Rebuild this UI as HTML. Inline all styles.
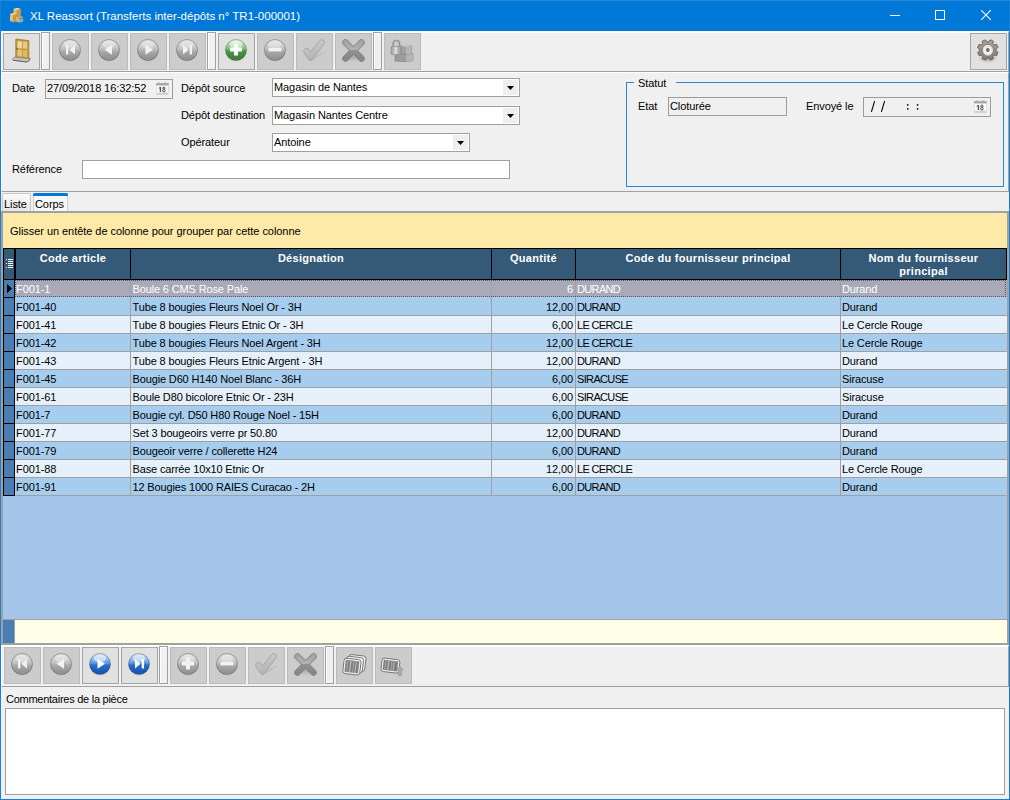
<!DOCTYPE html>
<html><head><meta charset="utf-8">
<style>
*{box-sizing:border-box;margin:0;padding:0}
html,body{width:1010px;height:800px;overflow:hidden;background:#f0f0f0;font-family:"Liberation Sans",sans-serif;font-size:11px;color:#000}
.a{position:absolute}
.t{position:absolute;white-space:pre;line-height:13px;letter-spacing:-0.09px}
#title{left:0;top:0;width:1010px;height:31px;background:#0078d7}
.btn{position:absolute;top:33px;width:37px;height:37px;border:1px solid #a5a5a5;background:#e1e1e1}
.btn.dis{border-color:#bcbcbc;background:#cccccc}
.sep{position:absolute;top:32px;width:9px;height:38px;border:1px solid #a0a0a0;background:#f0f0f0;box-shadow:inset 1px 1px 0 #fff}
.inp{position:absolute;border:1px solid #a0a0a0;background:#fff}
.hd{position:absolute;top:252px;text-align:center;color:#fff;font-weight:bold;letter-spacing:0.3px;line-height:13px;white-space:nowrap}
.inp.ro{background:#f0f0f0;border-color:#9c9c9c}
</style></head><body>
<!-- window frame -->
<div id="title" class="a"></div>
<div class="a" style="left:0;top:0;width:1px;height:800px;background:#1a7fd6"></div>
<div class="a" style="left:1009px;top:0;width:1px;height:800px;background:#1a7fd6"></div>
<div class="a" style="left:0;top:799px;width:1010px;height:1px;background:#1a7fd6"></div>
<div class="a" style="left:0;top:0;width:1010px;height:1px;background:#2a88d8"></div>
<div class="t" style="left:30px;top:10px;font-size:11.5px;color:#fff;letter-spacing:0">XL Reassort (Transferts inter-dépôts n° TR1-000001)</div>

<!-- toolbar -->
<div class="a" style="left:1px;top:31px;width:1008px;height:41px;background:#f0f0f0;border-top:2px solid #fff;border-left:1px solid #fff;border-bottom:1px solid #a0a0a0;border-right:1px solid #a0a0a0"></div>
<div class="btn" style="left:3px"></div>
<div class="sep" style="left:41px"></div>
<div class="btn dis" style="left:52px"></div>
<div class="btn dis" style="left:91px"></div>
<div class="btn dis" style="left:130px"></div>
<div class="btn dis" style="left:169px"></div>
<div class="sep" style="left:207px"></div>
<div class="btn" style="left:218px"></div>
<div class="btn dis" style="left:257px"></div>
<div class="btn dis" style="left:296px"></div>
<div class="btn dis" style="left:335px"></div>
<div class="sep" style="left:373px"></div>
<div class="btn dis" style="left:384px"></div>
<div class="btn" style="left:970px"></div>

<!-- header panel -->
<div class="a" style="left:1px;top:72px;width:1008px;height:120px;border-top:1px solid #fff;border-left:1px solid #fff;border-bottom:1px solid #a0a0a0;border-right:1px solid #a0a0a0"></div>
<div class="t" style="left:12px;top:82px">Date</div>
<div class="inp ro" style="left:45px;top:79px;width:128px;height:20px"></div>
<div class="t" style="left:47px;top:82px">27/09/2018 16:32:52</div>
<div class="t" style="left:181px;top:82px">Dépôt source</div>
<div class="t" style="left:181px;top:109px">Dépôt destination</div>
<div class="t" style="left:181px;top:136px">Opérateur</div>
<div class="t" style="left:12px;top:163px">Référence</div>
<div class="inp" style="left:272px;top:78px;width:248px;height:19px"></div>
<div class="t" style="left:274px;top:81px">Magasin de Nantes</div>
<div class="inp" style="left:272px;top:106px;width:248px;height:19px"></div>
<div class="t" style="left:274px;top:109px">Magasin Nantes Centre</div>
<div class="inp" style="left:272px;top:133px;width:198px;height:19px"></div>
<div class="t" style="left:274px;top:136px">Antoine</div>
<div class="inp" style="left:82px;top:160px;width:428px;height:19px"></div>

<!-- statut group -->
<div class="a" style="left:626px;top:82px;width:378px;height:105px;border:1px solid #2b87d6"></div>
<div class="a" style="left:634px;top:77px;width:42px;height:10px;background:#f0f0f0"></div>
<div class="t" style="left:638px;top:77px">Statut</div>
<div class="t" style="left:638px;top:100px">Etat</div>
<div class="inp ro" style="left:668px;top:97px;width:119px;height:19px"></div>
<div class="t" style="left:670px;top:100px">Cloturée</div>
<div class="t" style="left:806px;top:100px">Envoyé le</div>
<div class="inp ro" style="left:863px;top:97px;width:128px;height:20px"></div>

<!-- tabs -->
<div class="a" style="left:2px;top:193px;width:29px;height:19px;border:1px solid #c8c8c8;border-bottom:none;border-radius:2px 2px 0 0;background:linear-gradient(#fbfbfb,#e6e6e6)"></div>
<div class="t" style="left:4px;top:198px">Liste</div>
<div class="a" style="left:33px;top:193px;width:35px;height:19px;border:1px solid #cfcfcf;border-top:none;border-bottom:none;background:#f7f7f7"></div>
<div class="a" style="left:33px;top:193px;width:35px;height:3px;background:#0078d7;border-radius:2px 2px 0 0"></div>
<div class="t" style="left:35px;top:198px">Corps</div>
<!-- grid -->
<div class="a" style="left:1px;top:211px;width:1008px;height:434px;border:2px solid #a0a0a0;background:#a4c4e9"></div>
<div class="a" style="left:3px;top:213px;width:1004px;height:35px;background:#fde9a8"></div>
<div class="t" style="left:10px;top:225px;letter-spacing:-0.05px">Glisser un entête de colonne pour grouper par cette colonne</div>
<!--GRID-->
<div class="a" style="left:3px;top:248px;width:1004px;height:32px;background:#000"></div>
<div class="a" style="left:4px;top:249px;width:10px;height:30px;background:#355a78"></div>
<div class="a" style="left:16px;top:249px;width:114px;height:30px;background:#355a78"></div>
<div class="a" style="left:131px;top:249px;width:360px;height:30px;background:#355a78"></div>
<div class="a" style="left:492px;top:249px;width:83px;height:30px;background:#355a78"></div>
<div class="a" style="left:576px;top:249px;width:264px;height:30px;background:#355a78"></div>
<div class="a" style="left:841px;top:249px;width:165px;height:30px;background:#355a78"></div>
<div class="hd" style="left:16px;width:114px">Code article</div>
<div class="hd" style="left:131px;width:360px">Désignation</div>
<div class="hd" style="left:492px;width:83px">Quantité</div>
<div class="hd" style="left:576px;width:264px">Code du fournisseur principal</div>
<div class="hd" style="left:841px;width:165px">Nom du fournisseur<br>principal</div>
<svg class="a" style="left:6px;top:259px" width="8" height="10" viewBox="0 0 8 10" shape-rendering="crispEdges"><rect x="0" y="0" width="1" height="1" fill="#fff"/><rect x="2" y="0" width="5" height="1" fill="#fff"/><rect x="2" y="2" width="5" height="1" fill="#fff"/><rect x="0" y="4" width="1" height="1" fill="#fff"/><rect x="2" y="4" width="5" height="1" fill="#fff"/><rect x="2" y="6" width="5" height="1" fill="#fff"/><rect x="0" y="8" width="1" height="1" fill="#fff"/><rect x="2" y="8" width="5" height="1" fill="#fff"/></svg>
<div class="a" style="left:3px;top:280px;width:12px;height:216px;background:#000"></div>
<div class="a" style="left:4px;top:280px;width:10px;height:17px;background:#4a7db2"></div>
<div class="a" style="left:15px;top:280px;width:992px;height:17px;background:#a0a0a0"></div>
<div class="a" style="left:15px;top:280px;width:115px;height:17px;background:#a9a9b7"></div>
<div class="a" style="left:131px;top:280px;width:360px;height:17px;background:#a9a9b7"></div>
<div class="a" style="left:492px;top:280px;width:83px;height:17px;background:#a9a9b7"></div>
<div class="a" style="left:576px;top:280px;width:264px;height:17px;background:#a9a9b7"></div>
<div class="a" style="left:841px;top:280px;width:166px;height:17px;background:#a9a9b7"></div>
<div class="t" style="left:16px;top:283px;color:#fff">F001-1</div>
<div class="t" style="left:132.5px;top:283px;color:#fff;letter-spacing:-0.14px">Boule 6 CMS Rose Pale</div>
<div class="t" style="left:492px;top:283px;width:81px;text-align:right;color:#fff">6</div>
<div class="t" style="left:577px;top:283px;color:#fff;letter-spacing:-0.65px">DURAND</div>
<div class="t" style="left:842px;top:283px;color:#fff;letter-spacing:-0.14px">Durand</div>
<div class="a" style="left:4px;top:298px;width:10px;height:17px;background:#4a7db2"></div>
<div class="a" style="left:15px;top:297px;width:992px;height:19px;background:#a0a0a0"></div>
<div class="a" style="left:15px;top:297px;width:115px;height:18px;background:#a6cdee"></div>
<div class="a" style="left:131px;top:297px;width:360px;height:18px;background:#a6cdee"></div>
<div class="a" style="left:492px;top:297px;width:83px;height:18px;background:#a6cdee"></div>
<div class="a" style="left:576px;top:297px;width:264px;height:18px;background:#a6cdee"></div>
<div class="a" style="left:841px;top:297px;width:166px;height:18px;background:#a6cdee"></div>
<div class="t" style="left:16px;top:301px;color:#000">F001-40</div>
<div class="t" style="left:132.5px;top:301px;color:#000;letter-spacing:-0.14px">Tube 8 bougies Fleurs Noel Or - 3H</div>
<div class="t" style="left:492px;top:301px;width:81px;text-align:right;color:#000">12,00</div>
<div class="t" style="left:577px;top:301px;color:#000;letter-spacing:-0.65px">DURAND</div>
<div class="t" style="left:842px;top:301px;color:#000;letter-spacing:-0.14px">Durand</div>
<div class="a" style="left:4px;top:316px;width:10px;height:17px;background:#4a7db2"></div>
<div class="a" style="left:15px;top:316px;width:992px;height:18px;background:#a0a0a0"></div>
<div class="a" style="left:15px;top:316px;width:115px;height:17px;background:#e6f0fa"></div>
<div class="a" style="left:131px;top:316px;width:360px;height:17px;background:#e6f0fa"></div>
<div class="a" style="left:492px;top:316px;width:83px;height:17px;background:#e6f0fa"></div>
<div class="a" style="left:576px;top:316px;width:264px;height:17px;background:#e6f0fa"></div>
<div class="a" style="left:841px;top:316px;width:166px;height:17px;background:#e6f0fa"></div>
<div class="t" style="left:16px;top:319px;color:#000">F001-41</div>
<div class="t" style="left:132.5px;top:319px;color:#000;letter-spacing:-0.14px">Tube 8 bougies Fleurs Etnic Or - 3H</div>
<div class="t" style="left:492px;top:319px;width:81px;text-align:right;color:#000">6,00</div>
<div class="t" style="left:577px;top:319px;color:#000;letter-spacing:-0.65px">LE CERCLE</div>
<div class="t" style="left:842px;top:319px;color:#000;letter-spacing:-0.14px">Le Cercle Rouge</div>
<div class="a" style="left:4px;top:334px;width:10px;height:17px;background:#4a7db2"></div>
<div class="a" style="left:15px;top:334px;width:992px;height:18px;background:#a0a0a0"></div>
<div class="a" style="left:15px;top:334px;width:115px;height:17px;background:#a6cdee"></div>
<div class="a" style="left:131px;top:334px;width:360px;height:17px;background:#a6cdee"></div>
<div class="a" style="left:492px;top:334px;width:83px;height:17px;background:#a6cdee"></div>
<div class="a" style="left:576px;top:334px;width:264px;height:17px;background:#a6cdee"></div>
<div class="a" style="left:841px;top:334px;width:166px;height:17px;background:#a6cdee"></div>
<div class="t" style="left:16px;top:337px;color:#000">F001-42</div>
<div class="t" style="left:132.5px;top:337px;color:#000;letter-spacing:-0.14px">Tube 8 bougies Fleurs Noel Argent - 3H</div>
<div class="t" style="left:492px;top:337px;width:81px;text-align:right;color:#000">12,00</div>
<div class="t" style="left:577px;top:337px;color:#000;letter-spacing:-0.65px">LE CERCLE</div>
<div class="t" style="left:842px;top:337px;color:#000;letter-spacing:-0.14px">Le Cercle Rouge</div>
<div class="a" style="left:4px;top:352px;width:10px;height:17px;background:#4a7db2"></div>
<div class="a" style="left:15px;top:352px;width:992px;height:18px;background:#a0a0a0"></div>
<div class="a" style="left:15px;top:352px;width:115px;height:17px;background:#e6f0fa"></div>
<div class="a" style="left:131px;top:352px;width:360px;height:17px;background:#e6f0fa"></div>
<div class="a" style="left:492px;top:352px;width:83px;height:17px;background:#e6f0fa"></div>
<div class="a" style="left:576px;top:352px;width:264px;height:17px;background:#e6f0fa"></div>
<div class="a" style="left:841px;top:352px;width:166px;height:17px;background:#e6f0fa"></div>
<div class="t" style="left:16px;top:355px;color:#000">F001-43</div>
<div class="t" style="left:132.5px;top:355px;color:#000;letter-spacing:-0.14px">Tube 8 bougies Fleurs Etnic Argent - 3H</div>
<div class="t" style="left:492px;top:355px;width:81px;text-align:right;color:#000">12,00</div>
<div class="t" style="left:577px;top:355px;color:#000;letter-spacing:-0.65px">DURAND</div>
<div class="t" style="left:842px;top:355px;color:#000;letter-spacing:-0.14px">Durand</div>
<div class="a" style="left:4px;top:370px;width:10px;height:17px;background:#4a7db2"></div>
<div class="a" style="left:15px;top:370px;width:992px;height:18px;background:#a0a0a0"></div>
<div class="a" style="left:15px;top:370px;width:115px;height:17px;background:#a6cdee"></div>
<div class="a" style="left:131px;top:370px;width:360px;height:17px;background:#a6cdee"></div>
<div class="a" style="left:492px;top:370px;width:83px;height:17px;background:#a6cdee"></div>
<div class="a" style="left:576px;top:370px;width:264px;height:17px;background:#a6cdee"></div>
<div class="a" style="left:841px;top:370px;width:166px;height:17px;background:#a6cdee"></div>
<div class="t" style="left:16px;top:373px;color:#000">F001-45</div>
<div class="t" style="left:132.5px;top:373px;color:#000;letter-spacing:-0.14px">Bougie D60 H140 Noel Blanc - 36H</div>
<div class="t" style="left:492px;top:373px;width:81px;text-align:right;color:#000">6,00</div>
<div class="t" style="left:577px;top:373px;color:#000;letter-spacing:-0.65px">SIRACUSE</div>
<div class="t" style="left:842px;top:373px;color:#000;letter-spacing:-0.14px">Siracuse</div>
<div class="a" style="left:4px;top:388px;width:10px;height:17px;background:#4a7db2"></div>
<div class="a" style="left:15px;top:388px;width:992px;height:18px;background:#a0a0a0"></div>
<div class="a" style="left:15px;top:388px;width:115px;height:17px;background:#e6f0fa"></div>
<div class="a" style="left:131px;top:388px;width:360px;height:17px;background:#e6f0fa"></div>
<div class="a" style="left:492px;top:388px;width:83px;height:17px;background:#e6f0fa"></div>
<div class="a" style="left:576px;top:388px;width:264px;height:17px;background:#e6f0fa"></div>
<div class="a" style="left:841px;top:388px;width:166px;height:17px;background:#e6f0fa"></div>
<div class="t" style="left:16px;top:391px;color:#000">F001-61</div>
<div class="t" style="left:132.5px;top:391px;color:#000;letter-spacing:-0.14px">Boule D80 bicolore Etnic Or - 23H</div>
<div class="t" style="left:492px;top:391px;width:81px;text-align:right;color:#000">6,00</div>
<div class="t" style="left:577px;top:391px;color:#000;letter-spacing:-0.65px">SIRACUSE</div>
<div class="t" style="left:842px;top:391px;color:#000;letter-spacing:-0.14px">Siracuse</div>
<div class="a" style="left:4px;top:406px;width:10px;height:17px;background:#4a7db2"></div>
<div class="a" style="left:15px;top:406px;width:992px;height:18px;background:#a0a0a0"></div>
<div class="a" style="left:15px;top:406px;width:115px;height:17px;background:#a6cdee"></div>
<div class="a" style="left:131px;top:406px;width:360px;height:17px;background:#a6cdee"></div>
<div class="a" style="left:492px;top:406px;width:83px;height:17px;background:#a6cdee"></div>
<div class="a" style="left:576px;top:406px;width:264px;height:17px;background:#a6cdee"></div>
<div class="a" style="left:841px;top:406px;width:166px;height:17px;background:#a6cdee"></div>
<div class="t" style="left:16px;top:409px;color:#000">F001-7</div>
<div class="t" style="left:132.5px;top:409px;color:#000;letter-spacing:-0.14px">Bougie cyl. D50 H80 Rouge Noel - 15H</div>
<div class="t" style="left:492px;top:409px;width:81px;text-align:right;color:#000">6,00</div>
<div class="t" style="left:577px;top:409px;color:#000;letter-spacing:-0.65px">DURAND</div>
<div class="t" style="left:842px;top:409px;color:#000;letter-spacing:-0.14px">Durand</div>
<div class="a" style="left:4px;top:424px;width:10px;height:17px;background:#4a7db2"></div>
<div class="a" style="left:15px;top:424px;width:992px;height:18px;background:#a0a0a0"></div>
<div class="a" style="left:15px;top:424px;width:115px;height:17px;background:#e6f0fa"></div>
<div class="a" style="left:131px;top:424px;width:360px;height:17px;background:#e6f0fa"></div>
<div class="a" style="left:492px;top:424px;width:83px;height:17px;background:#e6f0fa"></div>
<div class="a" style="left:576px;top:424px;width:264px;height:17px;background:#e6f0fa"></div>
<div class="a" style="left:841px;top:424px;width:166px;height:17px;background:#e6f0fa"></div>
<div class="t" style="left:16px;top:427px;color:#000">F001-77</div>
<div class="t" style="left:132.5px;top:427px;color:#000;letter-spacing:-0.14px">Set 3 bougeoirs verre pr 50.80</div>
<div class="t" style="left:492px;top:427px;width:81px;text-align:right;color:#000">12,00</div>
<div class="t" style="left:577px;top:427px;color:#000;letter-spacing:-0.65px">DURAND</div>
<div class="t" style="left:842px;top:427px;color:#000;letter-spacing:-0.14px">Durand</div>
<div class="a" style="left:4px;top:442px;width:10px;height:17px;background:#4a7db2"></div>
<div class="a" style="left:15px;top:442px;width:992px;height:18px;background:#a0a0a0"></div>
<div class="a" style="left:15px;top:442px;width:115px;height:17px;background:#a6cdee"></div>
<div class="a" style="left:131px;top:442px;width:360px;height:17px;background:#a6cdee"></div>
<div class="a" style="left:492px;top:442px;width:83px;height:17px;background:#a6cdee"></div>
<div class="a" style="left:576px;top:442px;width:264px;height:17px;background:#a6cdee"></div>
<div class="a" style="left:841px;top:442px;width:166px;height:17px;background:#a6cdee"></div>
<div class="t" style="left:16px;top:445px;color:#000">F001-79</div>
<div class="t" style="left:132.5px;top:445px;color:#000;letter-spacing:-0.14px">Bougeoir verre / collerette H24</div>
<div class="t" style="left:492px;top:445px;width:81px;text-align:right;color:#000">6,00</div>
<div class="t" style="left:577px;top:445px;color:#000;letter-spacing:-0.65px">DURAND</div>
<div class="t" style="left:842px;top:445px;color:#000;letter-spacing:-0.14px">Durand</div>
<div class="a" style="left:4px;top:460px;width:10px;height:17px;background:#4a7db2"></div>
<div class="a" style="left:15px;top:460px;width:992px;height:18px;background:#a0a0a0"></div>
<div class="a" style="left:15px;top:460px;width:115px;height:17px;background:#e6f0fa"></div>
<div class="a" style="left:131px;top:460px;width:360px;height:17px;background:#e6f0fa"></div>
<div class="a" style="left:492px;top:460px;width:83px;height:17px;background:#e6f0fa"></div>
<div class="a" style="left:576px;top:460px;width:264px;height:17px;background:#e6f0fa"></div>
<div class="a" style="left:841px;top:460px;width:166px;height:17px;background:#e6f0fa"></div>
<div class="t" style="left:16px;top:463px;color:#000">F001-88</div>
<div class="t" style="left:132.5px;top:463px;color:#000;letter-spacing:-0.14px">Base carrée 10x10 Etnic Or</div>
<div class="t" style="left:492px;top:463px;width:81px;text-align:right;color:#000">12,00</div>
<div class="t" style="left:577px;top:463px;color:#000;letter-spacing:-0.65px">LE CERCLE</div>
<div class="t" style="left:842px;top:463px;color:#000;letter-spacing:-0.14px">Le Cercle Rouge</div>
<div class="a" style="left:4px;top:478px;width:10px;height:17px;background:#4a7db2"></div>
<div class="a" style="left:15px;top:478px;width:992px;height:18px;background:#a0a0a0"></div>
<div class="a" style="left:15px;top:478px;width:115px;height:17px;background:#a6cdee"></div>
<div class="a" style="left:131px;top:478px;width:360px;height:17px;background:#a6cdee"></div>
<div class="a" style="left:492px;top:478px;width:83px;height:17px;background:#a6cdee"></div>
<div class="a" style="left:576px;top:478px;width:264px;height:17px;background:#a6cdee"></div>
<div class="a" style="left:841px;top:478px;width:166px;height:17px;background:#a6cdee"></div>
<div class="t" style="left:16px;top:481px;color:#000">F001-91</div>
<div class="t" style="left:132.5px;top:481px;color:#000;letter-spacing:-0.14px">12 Bougies 1000 RAIES Curacao - 2H</div>
<div class="t" style="left:492px;top:481px;width:81px;text-align:right;color:#000">6,00</div>
<div class="t" style="left:577px;top:481px;color:#000;letter-spacing:-0.65px">DURAND</div>
<div class="t" style="left:842px;top:481px;color:#000;letter-spacing:-0.14px">Durand</div>
<div class="a" style="left:15px;top:280px;width:991px;height:17px;border:1px dotted #55556a"></div>
<svg class="a" style="left:7px;top:284px" width="6" height="10" viewBox="0 0 6 10"><path d="M0 0 L5 4.6 L0 9.3 Z" fill="#000"/></svg>
<!--/GRID-->
<!--BOTTOM-->
<div class="a" style="left:3px;top:619px;width:1004px;height:1px;background:#a0a0a0"></div>
<div class="a" style="left:3px;top:620px;width:11px;height:23px;background:#4a7db2"></div>
<div class="a" style="left:14px;top:620px;width:1px;height:23px;background:#a0a0a0"></div>
<div class="a" style="left:15px;top:620px;width:992px;height:23px;background:#fffee6"></div>
<!-- bottom toolbar -->
<div class="a" style="left:1px;top:645px;width:1008px;height:42px;border-top:2px solid #fff;border-left:1px solid #fff;border-bottom:1px solid #a0a0a0;border-right:1px solid #a0a0a0"></div>
<div class="btn dis" style="left:4px;top:647px"></div>
<div class="btn dis" style="left:43px;top:647px"></div>
<div class="btn" style="left:82px;top:647px"></div>
<div class="btn" style="left:121px;top:647px"></div>
<div class="sep" style="left:159px;top:646px"></div>
<div class="btn dis" style="left:170px;top:647px"></div>
<div class="btn dis" style="left:209px;top:647px"></div>
<div class="btn dis" style="left:248px;top:647px"></div>
<div class="btn dis" style="left:287px;top:647px"></div>
<div class="sep" style="left:325px;top:646px"></div>
<div class="btn dis" style="left:336px;top:647px"></div>
<div class="btn dis" style="left:375px;top:647px"></div>
<div class="t" style="left:6px;top:693px;letter-spacing:-0.26px">Commentaires de la pièce</div>
<div class="inp" style="left:5px;top:708px;width:1000px;height:87px"></div>
<!--/BOTTOM-->
<!--ICONS-->
<svg width="0" height="0" style="position:absolute">
<defs>
<linearGradient id="gball" x1="0" y1="0" x2="0" y2="1">
 <stop offset="0" stop-color="#e2e2e2"/><stop offset="0.42" stop-color="#c4c4c4"/><stop offset="0.6" stop-color="#a6a6a6"/><stop offset="0.9" stop-color="#939393"/><stop offset="1" stop-color="#a0a0a0"/></linearGradient>
<linearGradient id="grn" x1="0" y1="0" x2="0" y2="1">
 <stop offset="0" stop-color="#e4f2e2"/><stop offset="0.46" stop-color="#78c072"/><stop offset="0.54" stop-color="#4a9a46"/><stop offset="0.9" stop-color="#3d7f3a"/><stop offset="1" stop-color="#4a8f46"/></linearGradient>
<linearGradient id="blu" x1="0" y1="0" x2="0" y2="1">
 <stop offset="0" stop-color="#d4e6fa"/><stop offset="0.46" stop-color="#5c9ae4"/><stop offset="0.54" stop-color="#2a6fd0"/><stop offset="0.9" stop-color="#1a54b4"/><stop offset="1" stop-color="#2a66c4"/></linearGradient>
<radialGradient id="shad" cx="0.5" cy="0.5" r="0.5">
 <stop offset="0" stop-color="#000" stop-opacity="0.25"/><stop offset="1" stop-color="#000" stop-opacity="0"/></radialGradient>
<linearGradient id="door" x1="0" y1="0" x2="1" y2="0">
 <stop offset="0" stop-color="#c98c2e"/><stop offset="0.5" stop-color="#e6c27a"/><stop offset="1" stop-color="#c48a30"/></linearGradient>
<linearGradient id="chk" x1="0" y1="0" x2="0.3" y2="1"><stop offset="0" stop-color="#d2d2d2"/><stop offset="1" stop-color="#b2b2b2"/></linearGradient>
<linearGradient id="xg" x1="0" y1="0" x2="0" y2="1"><stop offset="0" stop-color="#a2a2a2"/><stop offset="0.45" stop-color="#b0b0b0"/><stop offset="0.5" stop-color="#929292"/><stop offset="1" stop-color="#888888"/></linearGradient>
<linearGradient id="lockg" x1="0" y1="0" x2="1" y2="0"><stop offset="0" stop-color="#9c9c9c"/><stop offset="0.4" stop-color="#d0d0d0"/><stop offset="1" stop-color="#9a9a9a"/></linearGradient>
<linearGradient id="gearg" x1="0" y1="0" x2="0" y2="1">
 <stop offset="0" stop-color="#aaa29c"/><stop offset="1" stop-color="#837a74"/></linearGradient>
</defs></svg>
<svg class="a" style="left:52px;top:33px" width="37" height="37" viewBox="0 0 37 37"><ellipse cx="18" cy="21" rx="10.5" ry="8.4" fill="url(#shad)"/><circle cx="18" cy="17" r="10.5" fill="url(#gball)" stroke="rgba(0,0,0,0.3)" stroke-width="0.9"/><ellipse cx="18" cy="11.5" rx="6.3" ry="3.78" fill="#fff" opacity="0.3"/><rect x="14" y="12" width="2.3" height="9.5" fill="#f2f2f2"/><path d="M17.5 16.8 L23 12 L23 21.6 Z" fill="#f2f2f2"/></svg>
<svg class="a" style="left:91px;top:33px" width="37" height="37" viewBox="0 0 37 37"><ellipse cx="18" cy="21" rx="10.5" ry="8.4" fill="url(#shad)"/><circle cx="18" cy="17" r="10.5" fill="url(#gball)" stroke="rgba(0,0,0,0.3)" stroke-width="0.9"/><ellipse cx="18" cy="11.5" rx="6.3" ry="3.78" fill="#fff" opacity="0.3"/><path d="M13.5 16.8 L21 11.8 L21 21.8 Z" fill="#f2f2f2"/></svg>
<svg class="a" style="left:130px;top:33px" width="37" height="37" viewBox="0 0 37 37"><ellipse cx="18" cy="21" rx="10.5" ry="8.4" fill="url(#shad)"/><circle cx="18" cy="17" r="10.5" fill="url(#gball)" stroke="rgba(0,0,0,0.3)" stroke-width="0.9"/><ellipse cx="18" cy="11.5" rx="6.3" ry="3.78" fill="#fff" opacity="0.3"/><path d="M23 16.8 L15.5 11.8 L15.5 21.8 Z" fill="#f2f2f2"/></svg>
<svg class="a" style="left:169px;top:33px" width="37" height="37" viewBox="0 0 37 37"><ellipse cx="18" cy="21" rx="10.5" ry="8.4" fill="url(#shad)"/><circle cx="18" cy="17" r="10.5" fill="url(#gball)" stroke="rgba(0,0,0,0.3)" stroke-width="0.9"/><ellipse cx="18" cy="11.5" rx="6.3" ry="3.78" fill="#fff" opacity="0.3"/><path d="M19.5 16.8 L14 12 L14 21.6 Z" fill="#f2f2f2"/><rect x="20.7" y="12" width="2.3" height="9.5" fill="#f2f2f2"/></svg>
<svg class="a" style="left:218px;top:33px" width="37" height="37" viewBox="0 0 37 37"><ellipse cx="18" cy="21" rx="10.5" ry="8.4" fill="url(#shad)"/><circle cx="18" cy="17" r="10.5" fill="url(#grn)" stroke="rgba(0,0,0,0.3)" stroke-width="0.9"/><ellipse cx="18" cy="11.5" rx="6.3" ry="3.78" fill="#fff" opacity="0.5"/><rect x="12" y="14.5" width="12" height="4" fill="#fafafa"/><rect x="16" y="10.5" width="4" height="12" fill="#fafafa"/></svg>
<svg class="a" style="left:257px;top:33px" width="37" height="37" viewBox="0 0 37 37"><ellipse cx="18" cy="21" rx="10.5" ry="8.4" fill="url(#shad)"/><circle cx="18" cy="17" r="10.5" fill="url(#gball)" stroke="rgba(0,0,0,0.3)" stroke-width="0.9"/><ellipse cx="18" cy="11.5" rx="6.3" ry="3.78" fill="#fff" opacity="0.3"/><rect x="11.5" y="14.8" width="13" height="3.6" fill="#f2f2f2"/></svg>
<svg class="a" style="left:296px;top:33px" width="37" height="37" viewBox="0 0 37 37"><path d="M12 25 Q15 29 19 26 L29 20 Q31 19 28 19 L18 22 Z" fill="#000" opacity="0.05"/><path d="M7.8 19.5 Q7 16.5 9.8 15.3 Q12 14.5 13.2 16.6 L14.6 19 L23.8 7.6 Q25.5 5.8 27.6 7.5 Q29.2 9 28 10.8 L16 26.8 Q14.5 28.6 13 26.8 Z" fill="url(#chk)" stroke="#a2a2a2" stroke-width="0.9"/></svg>
<svg class="a" style="left:335px;top:33px" width="37" height="37" viewBox="0 0 37 37"><ellipse cx="18.5" cy="24" rx="11" ry="5" fill="url(#shad)" opacity="0.6"/><path d="M10.5 9.5 L26.5 25.5 M26.5 9.5 L10.5 25.5" stroke="#868686" stroke-width="6.6" fill="none" stroke-linecap="round"/><path d="M10.5 9.5 L26.5 25.5 M26.5 9.5 L10.5 25.5" stroke="url(#xg)" stroke-width="5" fill="none" stroke-linecap="round"/><path d="M11 10 L18.5 16.5 L26 10" stroke="#b0b0b0" stroke-width="1.6" fill="none" stroke-linecap="round" opacity="0.8"/></svg>
<svg class="a" style="left:384px;top:33px" width="37" height="37" viewBox="0 0 37 37"><path d="M11 28 L11 20.5 L22 19.5 L29 20.5 L29 27.5 L22 28.8 Z" fill="#9c9c9c" stroke="#858585" stroke-width="0.7"/><path d="M22 21 L29 20.5 L29 27.5 L22 28.8 Z" fill="#b4b4b4"/><path d="M16.5 20.5 L16.5 13 L22 12 L27.5 13 L27.5 20.5 L22 21.5 Z" fill="#a2a2a2" stroke="#858585" stroke-width="0.7"/><path d="M16.5 13 L21.5 11 L27.5 12.5 L22 13.8 Z" fill="#c6c6c6"/><path d="M22 13.8 L27.5 12.5 L27.5 20.5 L22 21.5 Z" fill="#b6b6b6"/><path d="M9.2 13.5 L9.2 10.8 A3.2 3.3 0 0 1 15.6 10.8 L15.6 13.5" stroke="#979797" stroke-width="1.7" fill="none"/><rect x="7.2" y="13.4" width="9.8" height="8.2" rx="0.8" fill="url(#lockg)" stroke="#888" stroke-width="0.7"/><rect x="11" y="13.8" width="1.6" height="7.4" fill="#e2e2e2"/></svg>
<svg class="a" style="left:3px;top:33px" width="37" height="37" viewBox="0 0 37 37"><path d="M9.5 25.5 L13 23.5 L26.8 24.8 L27.2 26.5 L24 29 L10 27.2 Z" fill="#c4c4c4" stroke="#7e7e7e" stroke-width="0.7"/><path d="M10 27.2 L24 29 L27.2 26.5" fill="none" stroke="#6a6a6a" stroke-width="1"/><path d="M12.8 6 L25.8 7.6 L25.8 25.6 L12.8 24 Z" fill="#c8983e" stroke="#9a6c26" stroke-width="0.7"/><path d="M14.5 8 L19 8.5 L19 15.5 L14.5 15.2 Z" fill="#eed9a0"/><path d="M20 8.6 L24.3 9.1 L24.3 15.8 L20 15.6 Z" fill="#e6cc88"/><path d="M14.5 16.6 L19 16.9 L19 23.5 L14.5 23.2 Z" fill="#e2c47a"/><path d="M20 17 L24.3 17.3 L24.3 24 L20 23.7 Z" fill="#dcba6c"/><rect x="13.6" y="15.2" width="1.1" height="1.3" fill="#3a3a3a"/></svg>
<svg class="a" style="left:970px;top:33px" width="37" height="37" viewBox="0 0 37 37"><ellipse cx="18" cy="25" rx="10.5" ry="5.5" fill="url(#shad)" opacity="0.9"/><polygon points="20.03,6.84 20.69,7.01 21.34,7.22 21.97,7.47 22.58,7.76 23.18,8.10 23.17,9.29 22.92,10.59 23.33,10.94 23.71,11.32 24.07,11.72 24.83,11.82 26.56,11.39 26.91,11.98 27.22,12.58 27.48,13.21 27.71,13.85 27.90,14.51 27.05,15.35 25.95,16.09 25.99,16.62 26.00,17.16 25.97,17.70 26.43,18.31 27.96,19.23 27.79,19.89 27.58,20.54 27.33,21.17 27.04,21.78 26.70,22.38 25.51,22.37 24.21,22.12 23.86,22.53 23.48,22.91 23.08,23.27 22.98,24.03 23.41,25.76 22.82,26.11 22.22,26.42 21.59,26.68 20.95,26.91 20.29,27.10 19.45,26.25 18.71,25.15 18.18,25.19 17.64,25.20 17.10,25.17 16.49,25.63 15.57,27.16 14.91,26.99 14.26,26.78 13.63,26.53 13.02,26.24 12.42,25.90 12.43,24.71 12.68,23.41 12.27,23.06 11.89,22.68 11.53,22.28 10.77,22.18 9.04,22.61 8.69,22.02 8.38,21.42 8.12,20.79 7.89,20.15 7.70,19.49 8.55,18.65 9.65,17.91 9.61,17.38 9.60,16.84 9.63,16.30 9.17,15.69 7.64,14.77 7.81,14.11 8.02,13.46 8.27,12.83 8.56,12.22 8.90,11.62 10.09,11.63 11.39,11.88 11.74,11.47 12.12,11.09 12.52,10.73 12.62,9.97 12.19,8.24 12.78,7.89 13.38,7.58 14.01,7.32 14.65,7.09 15.31,6.90 16.15,7.75 16.89,8.85 17.42,8.81 17.96,8.80 18.50,8.83 19.11,8.37" fill="url(#gearg)" stroke="#635850" stroke-width="0.9" stroke-linejoin="round"/><circle cx="17.8" cy="17.0" r="5.6" fill="#f2f2f2" stroke="#6e6660" stroke-width="0.7"/><circle cx="17.8" cy="17.8" r="4.6" fill="none" stroke="#d4d4d4" stroke-width="0.8"/><circle cx="17.8" cy="17.0" r="1.9" fill="#6c6c6c"/></svg>
<svg class="a" style="left:4px;top:647px" width="37" height="37" viewBox="0 0 37 37"><ellipse cx="18" cy="21" rx="10.5" ry="8.4" fill="url(#shad)"/><circle cx="18" cy="17" r="10.5" fill="url(#gball)" stroke="rgba(0,0,0,0.3)" stroke-width="0.9"/><ellipse cx="18" cy="11.5" rx="6.3" ry="3.78" fill="#fff" opacity="0.3"/><rect x="14" y="12" width="2.3" height="9.5" fill="#f2f2f2"/><path d="M17.5 16.8 L23 12 L23 21.6 Z" fill="#f2f2f2"/></svg>
<svg class="a" style="left:43px;top:647px" width="37" height="37" viewBox="0 0 37 37"><ellipse cx="18" cy="21" rx="10.5" ry="8.4" fill="url(#shad)"/><circle cx="18" cy="17" r="10.5" fill="url(#gball)" stroke="rgba(0,0,0,0.3)" stroke-width="0.9"/><ellipse cx="18" cy="11.5" rx="6.3" ry="3.78" fill="#fff" opacity="0.3"/><path d="M13.5 16.8 L21 11.8 L21 21.8 Z" fill="#f2f2f2"/></svg>
<svg class="a" style="left:82px;top:647px" width="37" height="37" viewBox="0 0 37 37"><ellipse cx="18" cy="21" rx="10.5" ry="8.4" fill="url(#shad)"/><circle cx="18" cy="17" r="10.5" fill="url(#blu)" stroke="rgba(0,0,0,0.3)" stroke-width="0.9"/><ellipse cx="18" cy="11.5" rx="6.3" ry="3.78" fill="#fff" opacity="0.5"/><path d="M23 16.8 L15.5 11.8 L15.5 21.8 Z" fill="#fbfbfb"/></svg>
<svg class="a" style="left:121px;top:647px" width="37" height="37" viewBox="0 0 37 37"><ellipse cx="18" cy="21" rx="10.5" ry="8.4" fill="url(#shad)"/><circle cx="18" cy="17" r="10.5" fill="url(#blu)" stroke="rgba(0,0,0,0.3)" stroke-width="0.9"/><ellipse cx="18" cy="11.5" rx="6.3" ry="3.78" fill="#fff" opacity="0.5"/><path d="M19.5 16.8 L14 12 L14 21.6 Z" fill="#fbfbfb"/><rect x="20.7" y="12" width="2.3" height="9.5" fill="#fbfbfb"/></svg>
<svg class="a" style="left:170px;top:647px" width="37" height="37" viewBox="0 0 37 37"><ellipse cx="18" cy="21" rx="10.5" ry="8.4" fill="url(#shad)"/><circle cx="18" cy="17" r="10.5" fill="url(#gball)" stroke="rgba(0,0,0,0.3)" stroke-width="0.9"/><ellipse cx="18" cy="11.5" rx="6.3" ry="3.78" fill="#fff" opacity="0.3"/><rect x="12" y="14.5" width="12" height="4" fill="#f2f2f2"/><rect x="16" y="10.5" width="4" height="12" fill="#f2f2f2"/></svg>
<svg class="a" style="left:209px;top:647px" width="37" height="37" viewBox="0 0 37 37"><ellipse cx="18" cy="21" rx="10.5" ry="8.4" fill="url(#shad)"/><circle cx="18" cy="17" r="10.5" fill="url(#gball)" stroke="rgba(0,0,0,0.3)" stroke-width="0.9"/><ellipse cx="18" cy="11.5" rx="6.3" ry="3.78" fill="#fff" opacity="0.3"/><rect x="11.5" y="14.8" width="13" height="3.6" fill="#f2f2f2"/></svg>
<svg class="a" style="left:248px;top:647px" width="37" height="37" viewBox="0 0 37 37"><path d="M12 25 Q15 29 19 26 L29 20 Q31 19 28 19 L18 22 Z" fill="#000" opacity="0.05"/><path d="M7.8 19.5 Q7 16.5 9.8 15.3 Q12 14.5 13.2 16.6 L14.6 19 L23.8 7.6 Q25.5 5.8 27.6 7.5 Q29.2 9 28 10.8 L16 26.8 Q14.5 28.6 13 26.8 Z" fill="url(#chk)" stroke="#a2a2a2" stroke-width="0.9"/></svg>
<svg class="a" style="left:287px;top:647px" width="37" height="37" viewBox="0 0 37 37"><ellipse cx="18.5" cy="24" rx="11" ry="5" fill="url(#shad)" opacity="0.6"/><path d="M10.5 9.5 L26.5 25.5 M26.5 9.5 L10.5 25.5" stroke="#868686" stroke-width="6.6" fill="none" stroke-linecap="round"/><path d="M10.5 9.5 L26.5 25.5 M26.5 9.5 L10.5 25.5" stroke="url(#xg)" stroke-width="5" fill="none" stroke-linecap="round"/><path d="M11 10 L18.5 16.5 L26 10" stroke="#b0b0b0" stroke-width="1.6" fill="none" stroke-linecap="round" opacity="0.8"/></svg>
<svg class="a" style="left:336px;top:647px" width="37" height="37" viewBox="0 0 37 37"><g transform="rotate(7 17 19)"><rect x="12" y="7.8" width="17" height="15.5" rx="2.6" fill="#f4f4f4" stroke="#6e6e6e" stroke-width="0.9"/><rect x="9.8" y="9.8" width="17" height="15.5" rx="2.6" fill="#f4f4f4" stroke="#6e6e6e" stroke-width="0.9"/><rect x="7.5" y="12" width="17" height="15.5" rx="2.6" fill="#f4f4f4" stroke="#6e6e6e" stroke-width="0.9"/><rect x="9.5" y="14" width="13" height="11.5" fill="#808080" stroke="#666" stroke-width="0.4"/><rect x="11.1" y="14" width="0.7" height="11.5" fill="#bcbcbc"/><rect x="13.7" y="14" width="1.2" height="11.5" fill="#bcbcbc"/><rect x="17.1" y="14" width="0.6" height="11.5" fill="#bcbcbc"/><rect x="19.3" y="14" width="0.9" height="11.5" fill="#bcbcbc"/></g></svg>
<svg class="a" style="left:375px;top:647px" width="37" height="37" viewBox="0 0 37 37"><g transform="rotate(7 15 18)"><rect x="6.5" y="11.8" width="18" height="13.5" rx="2.6" fill="#f4f4f4" stroke="#6e6e6e" stroke-width="0.9"/><rect x="8.5" y="13.8" width="14" height="9.5" fill="#808080" stroke="#666" stroke-width="0.4"/><rect x="10.1" y="13.8" width="0.7" height="9.5" fill="#bcbcbc"/><rect x="12.7" y="13.8" width="1.2" height="9.5" fill="#bcbcbc"/><rect x="16.1" y="13.8" width="0.6" height="9.5" fill="#bcbcbc"/><rect x="18.3" y="13.8" width="0.9" height="9.5" fill="#bcbcbc"/></g><path d="M24.8 19 L28.3 23 L26.4 23 L26.4 28.5 L23.2 28.5 L23.2 23 L21.3 23 Z" fill="#aaaaaa" stroke="#8e8e8e" stroke-width="0.5"/></svg>
<!--/ICONS-->
<!--EXTRA-->
<svg class="a" style="left:9px;top:7px" width="16" height="16" viewBox="0 0 16 16">
<path d="M4.5 2 L8.5 1 L11.5 2 L11.5 8.5 L7.5 9.5 L4.5 8.5 Z" fill="#e2bb6c"/>
<path d="M4.5 2 L8.5 1 L11.5 2 L7.5 3 Z" fill="#f6dca0"/>
<path d="M7.5 3 L11.5 2 L11.5 8.5 L7.5 9.5 Z" fill="#c99a48"/>
<path d="M1 7 L5 6 L8 7 L8 14 L4 15 L1 14 Z" fill="#e4be72"/>
<path d="M1 7 L5 6 L8 7 L4 8 Z" fill="#f4d89a"/>
<path d="M4 8 L8 7 L8 14 L4 15 Z" fill="#c8984a"/>
<path d="M7 10 L11 9 L14 10 L14 14.5 L10 15.5 L7 14.5 Z" fill="#dcb468"/>
<path d="M9 11.2 L12.5 10.5 L15 11.5 L11.5 12.6 Z" fill="#3f8ae2"/>
<path d="M10 13.6 L12.8 13 L15 14 L12 15.4 Z" fill="#6aa8ee"/>
</svg>
<div class="a" style="left:890px;top:15px;width:10px;height:1px;background:#fff"></div>
<div class="a" style="left:935px;top:10px;width:10px;height:10px;border:1px solid #fff"></div>
<svg class="a" style="left:981px;top:10px" width="10" height="10" viewBox="0 0 10 10"><path d="M0 0 L10 10 M10 0 L0 10" stroke="#fff" stroke-width="1.1"/></svg>
<!-- calendars -->
<svg class="a" style="left:155px;top:81px" width="15" height="15" viewBox="0 0 15 15"><rect x="1" y="2" width="12.7" height="2.7" fill="#a9a9a9"/><rect x="3.4" y="1" width="1.3" height="1.4" fill="#bdbdbd"/><rect x="9.6" y="1" width="1.3" height="1.4" fill="#bdbdbd"/><rect x="1.4" y="4.7" width="11.9" height="7.2" fill="#fbfbfb" stroke="#d2d2d2" stroke-width="0.6"/><rect x="1.6" y="12.4" width="11.5" height="1.3" fill="#c4c4c4"/><rect x="4.7" y="6" width="1.4" height="4.9" fill="#505050"/><path d="M4.7 6 L3.5 7.1 L3.5 7.8 L4.7 7.2 Z" fill="#505050"/><ellipse cx="8.9" cy="7.15" rx="1.15" ry="1.05" fill="none" stroke="#505050" stroke-width="1"/><ellipse cx="8.9" cy="9.7" rx="1.3" ry="1.25" fill="none" stroke="#505050" stroke-width="1"/></svg>
<svg class="a" style="left:973px;top:99px" width="15" height="15" viewBox="0 0 15 15"><rect x="1" y="2" width="12.7" height="2.7" fill="#a9a9a9"/><rect x="3.4" y="1" width="1.3" height="1.4" fill="#bdbdbd"/><rect x="9.6" y="1" width="1.3" height="1.4" fill="#bdbdbd"/><rect x="1.4" y="4.7" width="11.9" height="7.2" fill="#fbfbfb" stroke="#d2d2d2" stroke-width="0.6"/><rect x="1.6" y="12.4" width="11.5" height="1.3" fill="#c4c4c4"/><rect x="4.7" y="6" width="1.4" height="4.9" fill="#505050"/><path d="M4.7 6 L3.5 7.1 L3.5 7.8 L4.7 7.2 Z" fill="#505050"/><ellipse cx="8.9" cy="7.15" rx="1.15" ry="1.05" fill="none" stroke="#505050" stroke-width="1"/><ellipse cx="8.9" cy="9.7" rx="1.3" ry="1.25" fill="none" stroke="#505050" stroke-width="1"/></svg>
<svg class="a" style="left:864px;top:96px" width="60" height="22" viewBox="0 0 60 22"><path d="M7.4 15.8 L10.6 5.2 M17.4 15.8 L20.6 5.2" stroke="#000" stroke-width="1.1" fill="none"/><rect x="43" y="8.2" width="1.5" height="1.5" fill="#000"/><rect x="43" y="12.1" width="1.5" height="1.5" fill="#000"/><rect x="52.8" y="8.2" width="1.5" height="1.5" fill="#000"/><rect x="52.8" y="12.1" width="1.5" height="1.5" fill="#000"/></svg>
<!-- combo arrows -->
<div class="a" style="left:503px;top:80px;width:15px;height:15px;background:#eeeeee"></div>
<svg class="a" style="left:507px;top:86px" width="7" height="4"><path d="M0 0 L7 0 L3.5 4 Z" fill="#000"/></svg>
<div class="a" style="left:503px;top:108px;width:15px;height:15px;background:#eeeeee"></div>
<svg class="a" style="left:507px;top:114px" width="7" height="4"><path d="M0 0 L7 0 L3.5 4 Z" fill="#000"/></svg>
<div class="a" style="left:453px;top:135px;width:15px;height:15px;background:#eeeeee"></div>
<svg class="a" style="left:457px;top:141px" width="7" height="4"><path d="M0 0 L7 0 L3.5 4 Z" fill="#000"/></svg>
<!--/EXTRA-->
</body></html>
